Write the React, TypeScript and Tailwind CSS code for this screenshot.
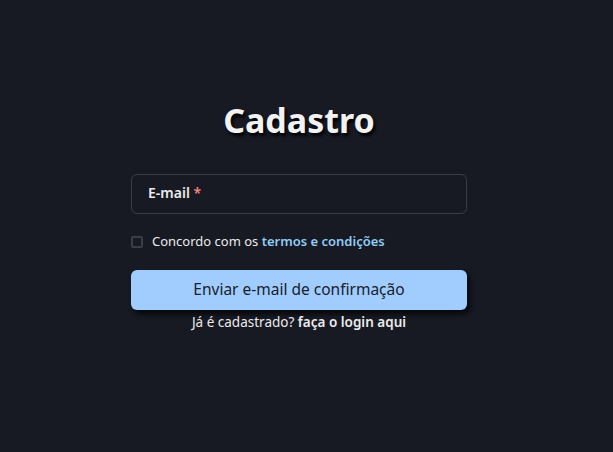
import React, { useState } from 'react';

const App: React.FC = () => {
  const [agreed, setAgreed] = useState(false);

  return (
    <div className="min-h-screen w-full bg-[#171923] flex flex-col items-center pt-[97px] pr-[15px] text-[#f2f2f3]" style={{ fontFamily: '"Noto Sans", "Open Sans", sans-serif' }}>
      <h1 className="text-[34px] font-bold leading-[46px] [text-shadow:2px_3px_3px_rgba(0,0,0,0.9)]">Cadastro</h1>

      <form className="w-[336px] mt-[31px] flex flex-col">
        {/* Campo de e-mail */}
        <label className="h-[40px] rounded-md border border-[#3a3d47] flex items-center px-4 pb-[4px]">
          <span className="text-[14px] font-semibold text-[#ebebec]">
            E-mail <span className="text-[#fc8181]">*</span>
          </span>
        </label>

        <div className="flex items-center gap-[9px] mt-[18px]">
          <button
            type="button"
            onClick={() => setAgreed(!agreed)}
            className="w-[12px] h-[12px] border-2 border-[#3a3d47] rounded-[2px] bg-transparent"
          />
          <span className="text-[13px] text-[#ebebec]">
            Concordo com os <a className="font-semibold text-[#90cdf4] cursor-pointer">termos e condições</a>
          </span>
        </div>

        <button
          type="button"
          className="mt-[18px] h-[40px] rounded-md bg-[#a0cdfd] text-[#1a202c] text-[15.5px] shadow-[3px_4px_5px_rgba(0,0,0,0.7)]"
        >
          Enviar e-mail de confirmação
        </button>

        <p className="text-center text-[13.5px] mt-[2px] text-[#ebebec]">
          Já é cadastrado? <a className="font-semibold cursor-pointer">faça o login aqui</a>
        </p>
      </form>
    </div>
  );
};

export default App;
